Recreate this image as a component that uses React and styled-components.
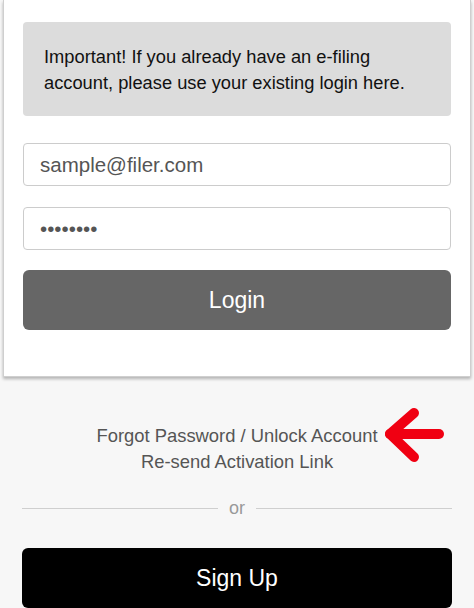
import React from "react";
import styled, { createGlobalStyle } from "styled-components";

const Global = createGlobalStyle`
  html, body { margin: 0; padding: 0; background: #f7f7f7; }
  body { font-family: "Liberation Sans", Arial, sans-serif; }
  * { box-sizing: border-box; }
`;

const Page = styled.div`
  width: 474px;
  min-height: 608px;
  overflow: hidden;
  display: flex;
  flex-direction: column;
`;

const Card = styled.div`
  margin: 0 3px;
  background: #fff;
  border: 1px solid #cfcfcf;
  border-top: none;
  box-shadow: 0 2px 3px rgba(0, 0, 0, 0.28);
  padding: 22px 19px 46px;
  display: flex;
  flex-direction: column;
`;

const Notice = styled.div`
  background: #dcdcdc;
  border-radius: 4px;
  padding: 22px 21px 20px;
  font-size: 18.3px;
  line-height: 26px;
  color: #111;
`;

const Field = styled.input`
  display: block;
  width: 100%;
  height: 43px;
  margin-top: ${(p) => p.$gap}px;
  padding: 0 16px;
  border: 1px solid #cccccc;
  border-radius: 4px;
  background: #fff;
  font-family: "Liberation Sans", Arial, sans-serif;
  font-size: 20.5px;
  color: #555;
  outline: none;
`;

const Button = styled.button`
  display: flex;
  align-items: center;
  justify-content: center;
  width: 100%;
  height: 60px;
  border: none;
  border-radius: 6px;
  background: ${(p) => p.$bg};
  color: #fff;
  font-family: "Liberation Sans", Arial, sans-serif;
  font-size: 23px;
  margin-top: ${(p) => p.$gap || 0}px;
  padding: 0;
`;

const Bottom = styled.div`
  padding: 46px 22px 0;
  display: flex;
  flex-direction: column;
`;

const Links = styled.div`
  position: relative;
  text-align: center;
  font-size: 18.4px;
  line-height: 26px;
  color: #555;
`;

const LinkLine = styled.div``;

const Arrow = styled.svg`
  position: absolute;
  left: 361px;
  top: -18px;
`;

const Divider = styled.div`
  display: flex;
  align-items: center;
  margin-top: 20px;
  height: 26px;
  font-size: 18px;
  color: #999;
  gap: 11px;
`;

const Rule = styled.div`
  flex: 1;
  height: 1px;
  background: #cfcfcf;
`;

export default function App() {
  return (
    <Page>
      <Global />
      <Card>
        <Notice>
          Important! If you already have an e-filing account, please use your
          existing login here.
        </Notice>
        <Field $gap={27} type="text" defaultValue="sample@filer.com" />
        <Field $gap={21} type="password" defaultValue="password" />
        <Button $bg="#666666" $gap={20}>Login</Button>
      </Card>
      <Bottom>
        <Links>
          <LinkLine>Forgot Password / Unlock Account</LinkLine>
          <LinkLine>Re-send Activation Link</LinkLine>
          <Arrow width="64" height="62" viewBox="0 0 64 62">
            <g
              fill="none"
              stroke="#f00012"
              strokeWidth="10"
              strokeLinecap="round"
              strokeLinejoin="round"
            >
              <path d="M7 29 L56 29" />
              <path d="M31 8 L7 29 L31 52" />
            </g>
          </Arrow>
        </Links>
        <Divider>
          <Rule />
          <span>or</span>
          <Rule />
        </Divider>
        <Button $bg="#000" $gap={27}>Sign Up</Button>
      </Bottom>
    </Page>
  );
}
